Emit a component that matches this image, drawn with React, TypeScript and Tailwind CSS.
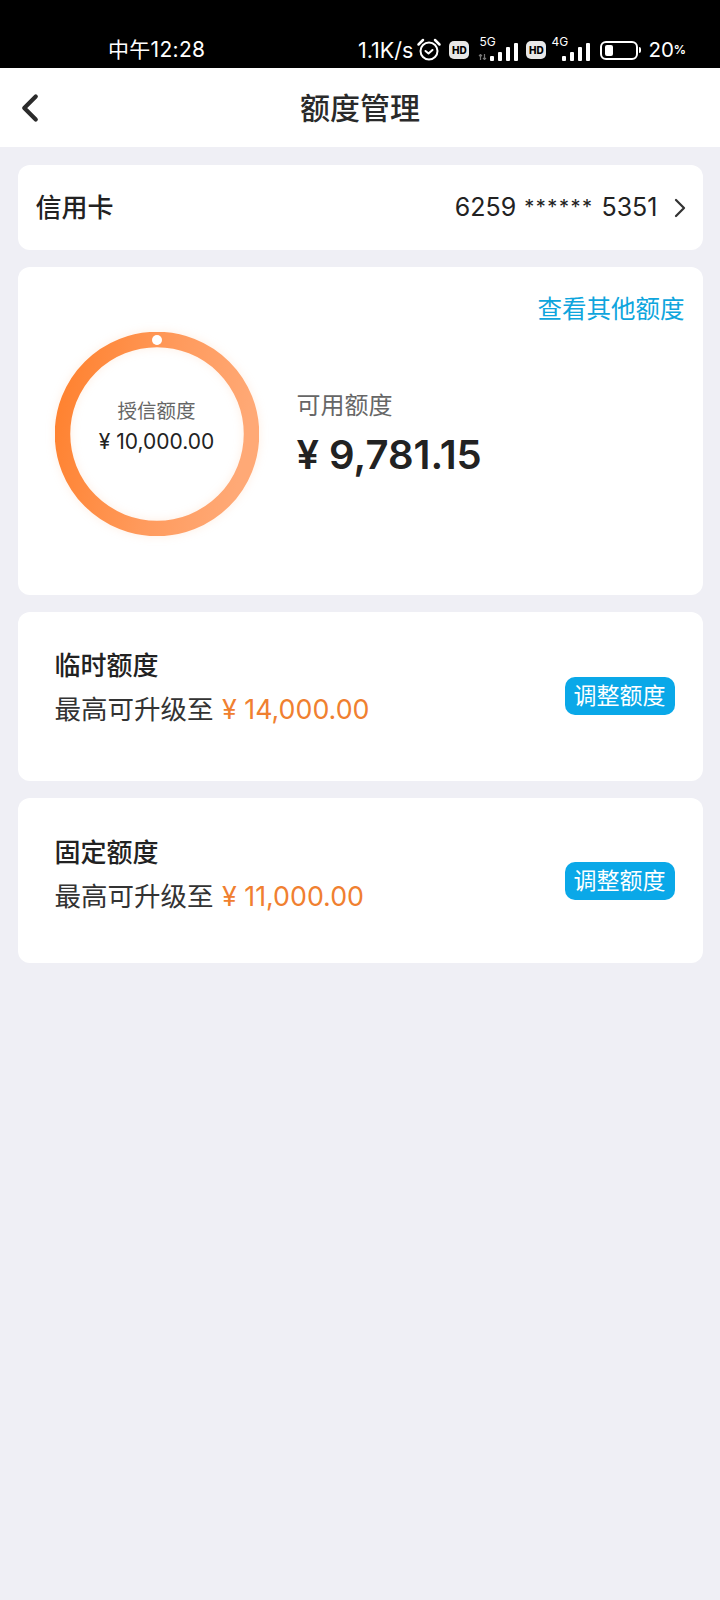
import React from 'react';
import { ChevronLeft, ChevronRight } from 'lucide-react';

const FONT = "font-['Inter','Noto_Sans_CJK_SC',sans-serif]";

const Bars = () => (
  <svg width="30" height="20" viewBox="0 0 30 20" className="text-white">
    <rect x="1" y="14" width="4" height="5" rx="1" fill="currentColor" />
    <rect x="9" y="10" width="4" height="9" rx="1" fill="currentColor" />
    <rect x="17" y="5" width="4" height="14" rx="1" fill="currentColor" />
    <rect x="25" y="1" width="4" height="18" rx="1" fill="currentColor" />
  </svg>
);

const HdBadge = () => (
  <div className="flex h-[18px] w-[20px] items-center justify-center rounded-[5px] bg-[#e8e8e8] text-[10px] leading-none font-extrabold text-black">
    HD
  </div>
);

const StatusBar = () => (
  <div className="flex h-[68px] items-end bg-black pb-[3px] text-white">
    <span className="ml-[108px] text-[21px] leading-[30px] tracking-[0.3px]">中午12:28</span>
    <div className="ml-auto mr-[34px] flex items-center">
      <span className="text-[21.500px] leading-[30px]">1.1K/s</span>
      <svg width="26" height="26" viewBox="0 0 26 26" fill="none" stroke="white" strokeWidth="2" className="ml-[3px]">
        <circle cx="13" cy="14" r="8.500" />
        <path d="M9.500 14l3 2.500 4-3.500" strokeLinecap="round" strokeLinejoin="round" />
        <path d="M2.500 7.500L7 3M23.500 7.500L19 3" strokeWidth="2.500" strokeLinecap="round" />
      </svg>
      <div className="ml-[7px]"><HdBadge /></div>
      <div className="relative ml-[7px] h-[24px] w-[43px]">
        <span className="absolute top-[-3px] left-[3px] text-[12px] leading-[14px]">5G</span>
        <svg width="9" height="6" viewBox="0 0 9 6" fill="none" stroke="#777777" strokeWidth="1.200" className="absolute bottom-[2px] left-[2px]">
          <path d="M2.500 6V0.500M1 2l1.500-1.500L4 2M6.500 0V5.500M5 4l1.500 1.500L8 4" />
        </svg>
        <div className="absolute right-0 bottom-0"><Bars /></div>
      </div>
      <div className="ml-[7px]"><HdBadge /></div>
      <div className="relative ml-[4px] h-[24px] w-[41px]">
        <span className="absolute top-[-3px] left-[1px] text-[12px] leading-[14px]">4G</span>
        <div className="absolute right-0 bottom-0"><Bars /></div>
      </div>
      <div className="ml-[9px] flex items-center">
        <div className="flex h-[19px] w-[38px] items-center rounded-[6px] border-2 border-white px-[3px]">
          <div className="h-[11px] w-[8px] rounded-[2px] bg-white" />
        </div>
        <div className="ml-[1px] h-[6px] w-[2px] rounded-r bg-white" />
      </div>
      <span className="ml-[7px] text-[20.500px] leading-[30px]">20</span>
      <span className="text-[12px] leading-[30px] font-bold">%</span>
    </div>
  </div>
);

const CreditRing = () => (
  <div className="relative h-[204px] w-[204px]">
    <svg width="204" height="204" viewBox="0 0 204 204" className="drop-shadow-[0_0_5px_rgba(255,170,110,0.2)]">
      <defs>
        <linearGradient id="ring" x1="0" y1="0.2" x2="1" y2="0.4">
          <stop offset="0" stopColor="#ff8230" />
          <stop offset="0.55" stopColor="#ff9a5c" />
          <stop offset="1" stopColor="#ffa976" />
        </linearGradient>
      </defs>
      <circle cx="102" cy="102" r="94.500" fill="none" stroke="url(#ring)" strokeWidth="15.500" />
      <circle cx="102" cy="8" r="5" fill="white" />
      <circle cx="102" cy="9" r="3.500" fill="white" />
    </svg>
    <div className="absolute inset-0 flex flex-col items-center pt-[65px]">
      <span className="text-[19.500px] leading-[28px] text-[#666666]">授信额度</span>
      <span className="mt-[2px] text-[21px] leading-[30px] text-[#222222]">¥ 10,000.00</span>
    </div>
  </div>
);

const LimitCard = ({ title, amount, heightClass, paddingClass, btnClass }: { title: string; amount: string; heightClass: string; paddingClass: string; btnClass: string }) => (
  <div className={`flex rounded-[12px] bg-white pl-[37px] pr-[28px] ${heightClass} ${paddingClass}`}>
    <div className="flex-1">
      <div className="text-[26px] leading-[36px] font-medium text-[#222222]">{title}</div>
      <div className="mt-[7px] text-[26.500px] leading-[36px] text-[#333333]">
        最高可升级至 <span className="ml-[1px] text-[26.800px] text-[#f08030]">¥ {amount}</span>
      </div>
    </div>
    <button className={`flex h-[38px] w-[110px] items-center justify-center rounded-[10px] bg-[#0aa8e8] text-[23px] leading-none text-white ${btnClass}`}>
      调整额度
    </button>
  </div>
);

export default function App() {
  return (
    <div className={`${FONT} flex min-h-[1600px] w-[720px] flex-col bg-[#efeff5]`}>
      <StatusBar />

      <div className="relative flex h-[79px] items-center justify-center bg-white">
        <ChevronLeft className="absolute left-[7px] top-[17px] text-[#2b2b2b]" size={46} strokeWidth={2.200} />
        <h1 className="text-[30px] leading-none font-medium text-[#2a2a2a]">额度管理</h1>
      </div>

      <div className="flex flex-col gap-[17px] px-[17.500px] pt-[18px]">
        <div className="flex h-[85px] items-center rounded-[12px] bg-white pl-[18px] pr-[7px]">
          <span className="text-[26px] font-medium text-[#222222]">信用卡</span>
          <span className="ml-auto text-[25px] text-[#222222]">
            6259 <span className="mx-[1px] align-[2px] text-[20px] tracking-[1.500px]">******</span> 5351
          </span>
          <ChevronRight className="ml-[6px] text-[#333333]" size={32} strokeWidth={1.700} />
        </div>

        <div className="relative h-[328px] rounded-[12px] bg-white pl-[37px] pt-[65px]">
          <span className="absolute top-[24px] right-[18px] text-[24.500px] leading-[36px] text-[#0ea5dd]">查看其他额度</span>
          <div className="flex items-center">
            <CreditRing />
            <div className="ml-[38px] mt-[1px]">
              <div className="text-[24px] leading-[34px] text-[#666666]">可用额度</div>
              <div className="mt-[7px] text-[40px] leading-[50px] font-semibold text-[#222222]">¥ 9,781.15</div>
            </div>
          </div>
        </div>

        <LimitCard title="临时额度" amount="14,000.00" heightClass="h-[169px]" paddingClass="pt-[36px]" btnClass="mt-[29px]" />
        <LimitCard title="固定额度" amount="11,000.00" heightClass="h-[165px]" paddingClass="pt-[37px]" btnClass="mt-[27px]" />
      </div>
    </div>
  );
}
